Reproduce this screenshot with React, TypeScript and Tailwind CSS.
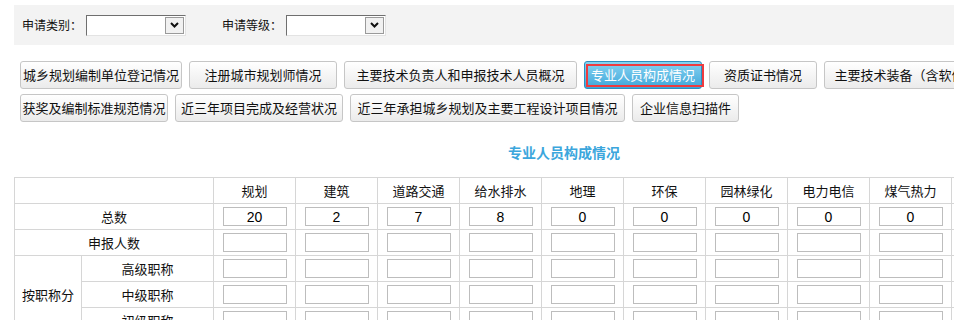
import React from "react";

const FONT = { fontFamily: '"SimSun", "Noto Sans CJK SC", "Noto Sans", sans-serif' };

const ROW1 = [
  { label: "城乡规划编制单位登记情况", w: "w-[162px]" },
  { label: "注册城市规划师情况", w: "w-[148px]" },
  { label: "主要技术负责人和申报技术人员概况", w: "w-[233px]" },
  { label: "专业人员构成情况", w: "w-[118px]", active: true },
  { label: "资质证书情况", w: "w-[108px]" },
  { label: "主要技术装备（含软件）情况", w: "w-[190px]" },
];

const ROW2 = [
  { label: "获奖及编制标准规范情况", w: "w-[148px]" },
  { label: "近三年项目完成及经营状况", w: "w-[168px]" },
  { label: "近三年承担城乡规划及主要工程设计项目情况", w: "w-[275px]" },
  { label: "企业信息扫描件", w: "w-[107px]" },
];

// last column is off-screen, only its left border shows
const COLUMNS = ["规划", "建筑", "道路交通", "给水排水", "地理", "环保", "园林绿化", "电力电信", "煤气热力", ""];
const TOTALS = ["20", "2", "7", "8", "0", "0", "0", "0", "0", ""];

type Btn = { label: string; w: string; active?: boolean };

function TabButton({ btn }: { btn: Btn }) {
  if (btn.active) {
    return (
      <button
        type="button"
        className={`relative ${btn.w} h-[28px] shrink-0 rounded-[3px] border border-[#2b8fbf] bg-gradient-to-b from-[#86d3f1] to-[#3ba7da] text-[13px] text-white`}
      >
        {btn.label}
        <span className="absolute top-[2px] bottom-[1px] left-[1px] right-[-3px] border-2 border-[#ee3b3f]" />
      </button>
    );
  }
  return (
    <button
      type="button"
      className={`${btn.w} h-[28px] shrink-0 rounded-[3px] border border-[#c6c6c6] bg-gradient-to-b from-white to-[#ebebeb] text-[13px] text-[#111]`}
    >
      {btn.label}
    </button>
  );
}

function FakeSelect() {
  return (
    <div className="flex h-[21px] w-[100px] items-center justify-end border border-t-[#6f6f6f] border-l-[#6f6f6f] border-r-[#e3e3e3] border-b-[#e3e3e3] bg-white pr-[1px]">
      <div className="flex h-[17px] w-[19px] items-center justify-center border border-[#9a9a9a] bg-[#f1f1f1]">
        <svg width="9" height="6" viewBox="0 0 9 6">
          <path d="M1 1 L4.5 4.5 L8 1" fill="none" stroke="#111" strokeWidth="2" />
        </svg>
      </div>
    </div>
  );
}

function NumInput({ value }: { value?: string }) {
  return (
    <div
      className="mx-auto flex h-[19px] w-[64px] items-center justify-center border border-[#bdbdbd] bg-white text-[14px] leading-none text-black"
      style={{ fontFamily: '"Liberation Sans", Arial, sans-serif' }}
    >
      {value}
    </div>
  );
}

const td = "h-[26px] border border-[#d6d6d6] p-0 text-center align-middle";

export default function App() {
  return (
    <div className="h-[320px] w-[954px] overflow-hidden bg-white pt-[5px] pl-[14px] text-[#111]" style={FONT}>
      <div className="flex h-[40px] w-[1200px] items-center bg-[#f3f3f3] pl-[8px] text-[12px]">
        <span>申请类别：</span>
        <div className="ml-[4px]">
          <FakeSelect />
        </div>
        <span className="ml-[36px]">申请等级：</span>
        <div className="ml-[4px]">
          <FakeSelect />
        </div>
      </div>

      <div className="mt-[16px] flex flex-col gap-[5px] pl-[6px]">
        <div className="flex gap-[7px]">
          {ROW1.map((b) => (
            <TabButton key={b.label} btn={b} />
          ))}
        </div>
        <div className="flex gap-[7px]">
          {ROW2.map((b) => (
            <TabButton key={b.label} btn={b} />
          ))}
        </div>
      </div>

      <div className="mt-[20px] w-[1100px] text-center text-[14px] font-bold leading-[20px] text-[#3ba6dc]">
        专业人员构成情况
      </div>

      <table className="mt-[15px] w-[1019px] min-w-[1019px] table-fixed border-collapse text-[13px]">
        <colgroup>
          <col className="w-[67px]" />
          <col className="w-[132px]" />
          {COLUMNS.map((c, i) => (
            <col key={i} className="w-[82px]" />
          ))}
        </colgroup>
        <tbody>
          <tr>
            <td className={td} colSpan={2} />
            {COLUMNS.map((c, i) => (
              <td key={i} className={td}>
                {c}
              </td>
            ))}
          </tr>
          <tr>
            <td className={td} colSpan={2}>
              总数
            </td>
            {TOTALS.map((v, i) => (
              <td key={i} className={td}>
                <NumInput value={v} />
              </td>
            ))}
          </tr>
          <tr>
            <td className={td} colSpan={2}>
              申报人数
            </td>
            {COLUMNS.map((c, i) => (
              <td key={i} className={td}>
                <NumInput />
              </td>
            ))}
          </tr>
          {["高级职称", "中级职称", "初级职称"].map((label, idx) => (
            <tr key={label}>
              {idx === 0 && (
                <td className={td} rowSpan={3}>
                  按职称分
                </td>
              )}
              <td className={td}>{label}</td>
              {COLUMNS.map((c, i) => (
                <td key={i} className={td}>
                  <NumInput />
                </td>
              ))}
            </tr>
          ))}
        </tbody>
      </table>
    </div>
  );
}
